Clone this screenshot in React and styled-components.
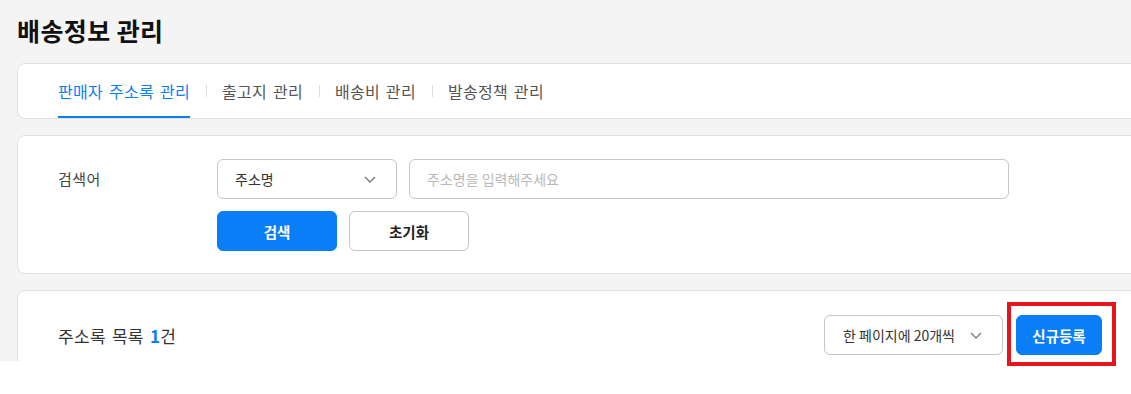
import React from 'react';
import styled, { createGlobalStyle } from 'styled-components';

const BLUE = '#0a7ef6';

const GlobalStyle = createGlobalStyle`
  html, body {
    margin: 0;
    padding: 0;
    background: #fff;
    overflow: hidden;
  }
  body {
    font-family: "Noto Sans CJK KR", "Noto Sans", sans-serif;
    color: #333;
  }
  * { box-sizing: border-box; }
`;

const Root = styled.div`
    position: relative;
    width: 1131px;
    height: 394px;
  `,
  Page = styled.div`
    height: 361px;
    background: #f4f4f4;
    overflow: hidden;
    padding: 15px 0 0 17px;
  `,
  Title = styled.h1`
    margin: 0 0 18px;
    font-size: 25px;
    line-height: 30px;
    font-weight: 700;
    color: #111;
    letter-spacing: 0.4px;
  `,
  Card = styled.section`
    width: 1126px;
    background: #fff;
    border: 1px solid #e1e1e1;
    border-radius: 8px;
    margin-bottom: 16px;
    padding: ${p => p.$pad || '0 40px'};
  `,
  Tabs = styled.nav`
    display: flex;
    align-items: center;
    height: 54px;
  `,
  TabItem = styled.a`
    display: flex;
    align-items: center;
    height: 54px;
    padding-top: 2px;
    font-size: 16px;
    letter-spacing: 0.3px;
    word-spacing: 2px;
    color: ${p => (p.$active ? BLUE : '#555')};
    border-bottom: 2px solid ${p => (p.$active ? BLUE : 'transparent')};
    cursor: pointer;
  `,
  TabDivider = styled.span`
    width: 1px;
    height: 12px;
    background: #ddd;
    margin: 0 15px 0 16px;
  `,
  SearchGrid = styled.div`
    display: grid;
    grid-template-columns: 159px auto;
    row-gap: 12px;
  `,
  Label = styled.div`
    font-size: 15px;
    letter-spacing: 0.4px;
    line-height: 40px;
    color: #444;
  `,
  Row = styled.div`
    display: flex;
    align-items: center;
    gap: ${p => p.$gap || 12}px;
  `,
  SelectBox = styled.div`
    display: flex;
    align-items: center;
    justify-content: space-between;
    width: ${p => p.$w}px;
    height: 40px;
    padding: 0 20px 0 ${p => p.$pl || 17}px;
    border: 1px solid #c6c6c6;
    border-radius: 6px;
    background: #fff;
    font-size: 14px;
    color: #333;
  `,
  TextInput = styled.input`
    width: 600px;
    height: 40px;
    padding: 0 17px;
    border: 1px solid #c6c6c6;
    border-radius: 6px;
    font-family: inherit;
    font-size: 14px;
    color: #333;
    outline: none;
    &::placeholder { color: #b9b9b9; }
  `,
  Button = styled.button`
    width: ${p => p.$w}px;
    height: 40px;
    padding: 0;
    border-radius: 6px;
    font-family: inherit;
    font-size: 14.5px;
    font-weight: 700;
    cursor: pointer;
    border: 1px solid ${p => (p.$primary ? BLUE : '#c6c6c6')};
    background: ${p => (p.$primary ? BLUE : '#fff')};
    color: ${p => (p.$primary ? '#fff' : '#222')};
  `,
  ListHead = styled.div`
    display: flex;
    align-items: center;
    justify-content: space-between;
    width: 1044px;
  `,
  Count = styled.div`
    font-size: 17px;
    letter-spacing: 0.3px;
    word-spacing: 2px;
    color: #333;
    & b { color: ${BLUE}; font-weight: 700; }
  `,
  Highlight = styled.div`
    position: absolute;
    left: 1007px;
    top: 302px;
    width: 109px;
    height: 64px;
    border: 4px solid #e8141c;
    pointer-events: none;
  `;

const Chevron = () => (
  <svg width="12" height="7" viewBox="0 0 12 7" fill="none">
    <polyline points="1,1 6,6 11,1" stroke="#777" strokeWidth="1.3" />
  </svg>
);

const tabs = ['판매자 주소록 관리', '출고지 관리', '배송비 관리', '발송정책 관리'];

const App = () => (
  <Root>
    <GlobalStyle />
    <Page>
      <Title>배송정보 관리</Title>
      <Card>
        <Tabs>
          {tabs.map((t, i) => (
            <React.Fragment key={t}>
              {i > 0 && <TabDivider />}
              <TabItem $active={i === 0}>{t}</TabItem>
            </React.Fragment>
          ))}
        </Tabs>
      </Card>
      <Card $pad="23px 40px 22px">
        <SearchGrid>
          <Label>검색어</Label>
          <Row>
            <SelectBox $w={180}>
              주소명
              <Chevron />
            </SelectBox>
            <TextInput placeholder="주소명을 입력해주세요" />
          </Row>
          <span />
          <Row>
            <Button $primary $w={120}>검색</Button>
            <Button $w={120}>초기화</Button>
          </Row>
        </SearchGrid>
      </Card>
      <Card $pad="24px 40px 40px">
        <ListHead>
          <Count>
            주소록 목록 <b>1</b>건
          </Count>
          <Row $gap={13}>
            <SelectBox $w={179} $pl={18}>
              한 페이지에 20개씩
              <Chevron />
            </SelectBox>
            <Button $primary $w={86}>신규등록</Button>
          </Row>
        </ListHead>
      </Card>
    </Page>
    <Highlight />
  </Root>
);

export default App;
